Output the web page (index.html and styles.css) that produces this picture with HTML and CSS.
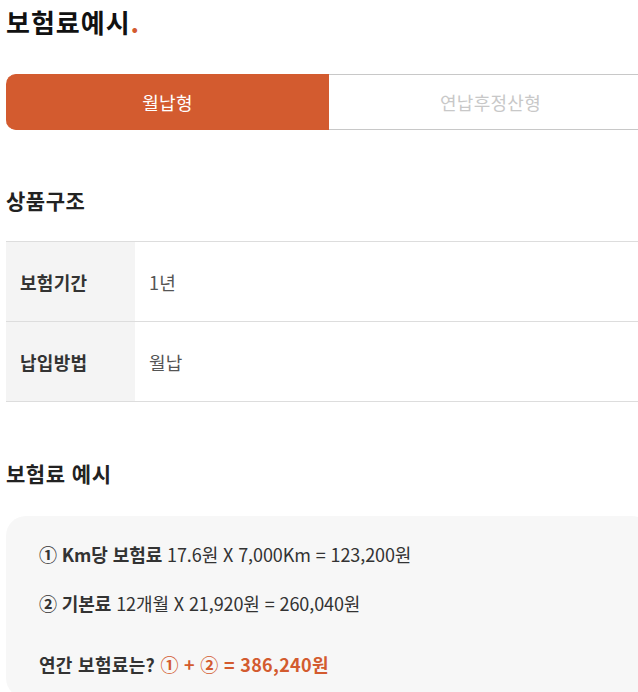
FILE: index.html
```html
<!DOCTYPE html>
<html lang="ko">
<head>
  <meta charset="UTF-8">
  <title>보험료예시</title>
  <link rel="stylesheet" href="styles.css">
</head>
<body>
  <div class="page">
    <h1 class="pageTitle">보험료예시<span class="dot">.</span></h1>

    <div class="tabs">
      <div class="tab active">월납형</div>
      <div class="tab">연납후정산형</div>
    </div>

    <h2 class="sectionTitle first">상품구조</h2>
    <table class="infoTable">
      <tr>
        <th>보험기간</th>
        <td>1년</td>
      </tr>
      <tr>
        <th>납입방법</th>
        <td>월납</td>
      </tr>
    </table>

    <h2 class="sectionTitle">보험료 예시</h2>
    <div class="exampleBox">
      <p class="calcLine"><b>① Km당 보험료</b> 17.6원 X 7,000Km = 123,200원</p>
      <p class="calcLine"><b>② 기본료</b> 12개월 X 21,920원 = 260,040원</p>
      <p class="total"><b>연간 보험료는?</b> <span class="accent">① + ② = 386,240원</span></p>
    </div>
  </div>
</body>
</html>
```

FILE: styles.css
```css
body {
  margin: 0;
  background-color: #fff;
  font-family: "Noto Sans CJK KR", "Noto Sans", sans-serif;
  color: #333;
  overflow: hidden;
}

.page {
  padding-left: 6px;
  width: 646px;
}

.pageTitle {
  margin: 0;
  padding-top: 2px;
  font-size: 26px;
  line-height: 40px;
  font-weight: bold;
  color: #111;
  letter-spacing: 1px;
}

.pageTitle .dot {
  color: #d35b2f;
}

.tabs {
  display: flex;
  margin-top: 32px;
  height: 56px;
}

.tab {
  flex: 1;
  display: flex;
  align-items: center;
  justify-content: center;
  font-size: 18px;
  letter-spacing: 0.3px;
  color: #c8c8c8;
  border-top: 1px solid #c8c8c8;
  border-bottom: 1px solid #c8c8c8;
}

.tab.active {
  background-color: #d35b2f;
  border-color: #d35b2f;
  color: #fff;
  border-radius: 10px 0 0 10px;
}

.sectionTitle {
  margin: 0;
  font-size: 21px;
  line-height: 30px;
  font-weight: bold;
  color: #222;
  margin-top: 56px;
  letter-spacing: 0.5px;
}

.sectionTitle.first {
  margin-top: 55px;
}

.infoTable {
  width: 100%;
  border-collapse: collapse;
  margin-top: 26px;
}

.infoTable th,
.infoTable td {
  height: 79px;
  border-top: 1px solid #ddd;
  border-bottom: 1px solid #ddd;
  font-size: 18px;
  letter-spacing: 0.3px;
  text-align: left;
  padding: 0;
}

.infoTable th {
  width: 129px;
  padding-left: 14px;
  box-sizing: border-box;
  background-color: #f4f4f4;
  color: #333;
}

.infoTable td {
  padding-left: 14px;
  color: #555;
}

.exampleBox {
  margin-top: 28px;
  background-color: #f7f7f7;
  border-radius: 20px;
  padding: 24px 33px 20px;
}

.exampleBox p {
  margin: 0;
  font-size: 18px;
  line-height: 28px;
  color: #333;
}

.exampleBox .calcLine {
  letter-spacing: -0.1px;
}

.exampleBox .calcLine + .calcLine {
  margin-top: 21px;
}

.exampleBox .total {
  margin-top: 33px;
  letter-spacing: 0.3px;
}

.accent {
  color: #d35b2f;
  font-weight: bold;
}
```
